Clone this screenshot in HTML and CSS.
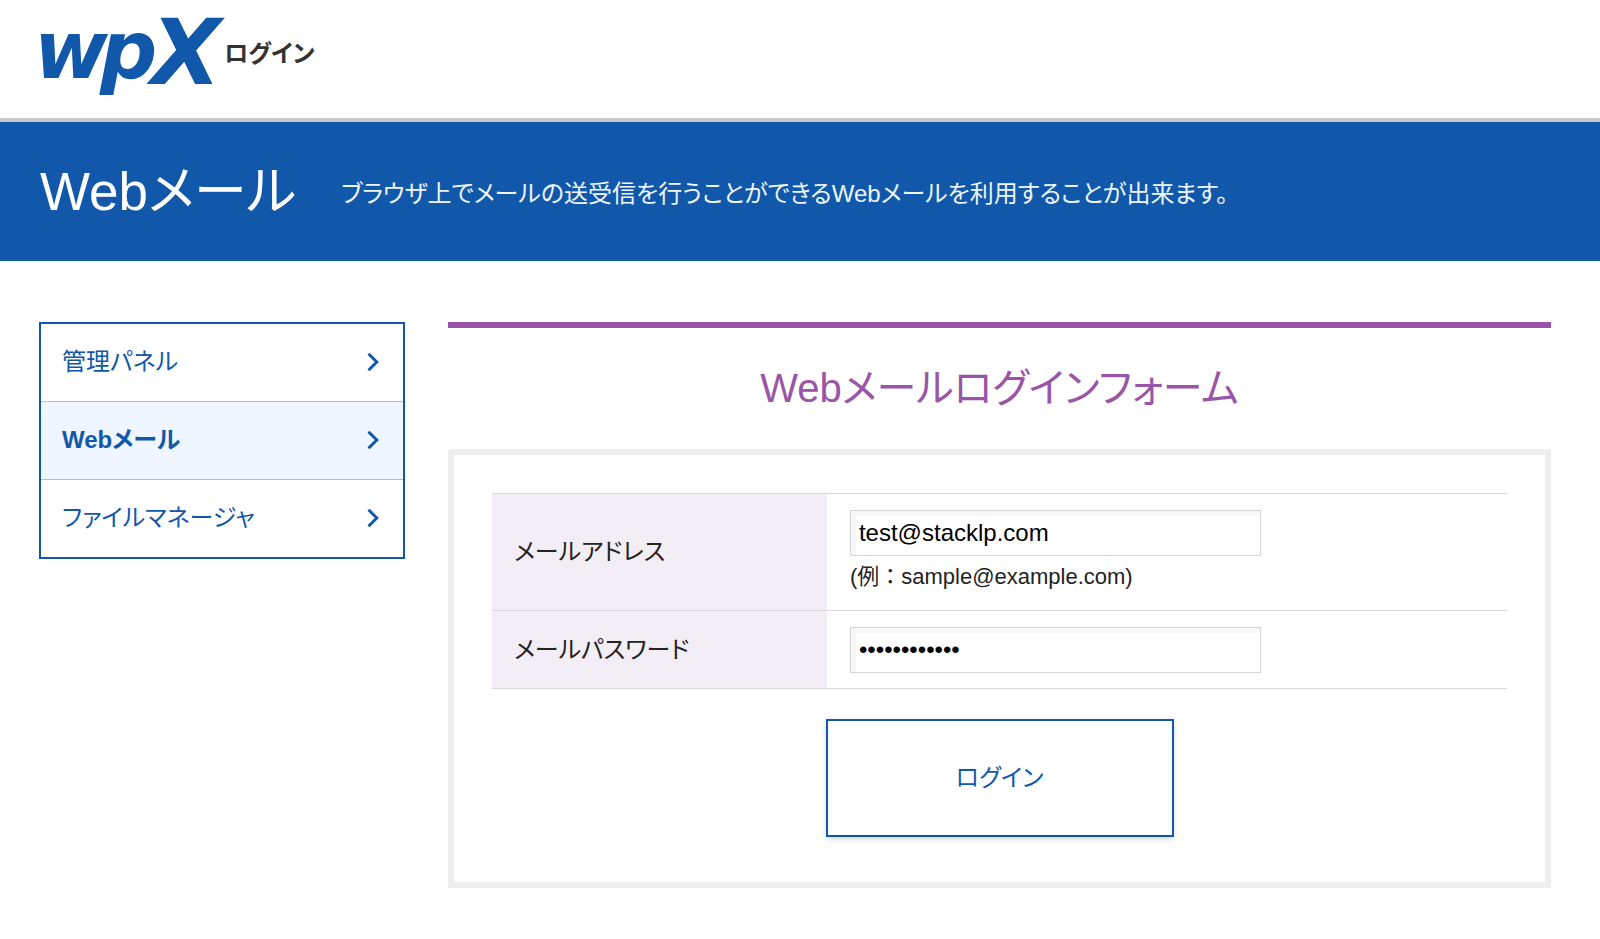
FILE: index.html
```html
<!DOCTYPE html>
<html lang="ja">
<head>
<meta charset="utf-8">
<meta name="viewport" content="width=device-width, initial-scale=1">
<title>Webメール | wpX ログイン</title>
<link rel="stylesheet" href="styles.css">
</head>
<body>
<header class="site-header">
  <svg class="logo" viewBox="0 0 184 118" role="img" aria-label="wpX">
    <text y="78"><tspan class="logo-small" x="-6">w</tspan><tspan class="logo-small" x="60">p</tspan><tspan class="logo-large" x="111" y="84">X</tspan></text>
  </svg>
  <span class="site-name">ログイン</span>
</header>
<div class="hero">
  <h1 class="hero-title">Webメール</h1>
  <p class="hero-text">ブラウザ上でメールの送受信を行うことができるWebメールを利用することが出来ます。</p>
</div>
<div class="content">
  <nav class="side-nav">
    <a class="side-link" href="#">管理パネル<svg class="chevron" viewBox="0 0 12 20"><path d="M1.5 1.8 9.8 10 1.5 18.2"/></svg></a>
    <a class="side-link is-current" href="#" aria-current="page">Webメール<svg class="chevron" viewBox="0 0 12 20"><path d="M1.5 1.8 9.8 10 1.5 18.2"/></svg></a>
    <a class="side-link" href="#">ファイルマネージャ<svg class="chevron" viewBox="0 0 12 20"><path d="M1.5 1.8 9.8 10 1.5 18.2"/></svg></a>
  </nav>
  <main class="main">
    <h2 class="form-title">Webメールログインフォーム</h2>
    <form class="login-form">
      <table class="fields">
        <tr>
          <th scope="row"><label for="mail">メールアドレス</label></th>
          <td><input class="field" id="mail" type="text" value="test@stacklp.com"><p class="hint">(例：sample@example.com)</p></td>
        </tr>
        <tr>
          <th scope="row"><label for="password">メールパスワード</label></th>
          <td><input class="field" id="password" type="password" value="abcdefghijkl"></td>
        </tr>
      </table>
      <button class="submit" type="submit">ログイン</button>
    </form>
  </main>
</div>
</body>
</html>
```

FILE: styles.css
```css
* {
  box-sizing: border-box;
}

body {
  margin: 0;
  background: #fff;
  color: #222;
  font-family: "Liberation Sans", "Noto Sans CJK JP", sans-serif;
  font-size: 24px;
  line-height: 36px;
  font-feature-settings: "palt";
}

.site-header {
  display: flex;
  align-items: center;
  padding: 0 40px;
  border-bottom: 4px solid #c8c8c8;
}

.logo {
  width: 184px;
  height: 118px;
  overflow: visible;
  fill: #1158aa;
  font-family: "DejaVu Sans", sans-serif;
  font-style: italic;
  font-weight: 700;
}

.logo-small {
  font-size: 80px;
}

.logo-large {
  font-size: 91px;
}

.site-name {
  padding-bottom: 11px;
  color: #333;
  font-weight: 700;
}

.hero {
  display: flex;
  align-items: center;
  gap: 45px;
  padding: 32px 40px;
  background: #1158aa;
  color: #fff;
}

.hero-title {
  margin: 0;
  font-size: 53px;
  font-weight: 400;
  line-height: 75px;
}

.hero-text {
  margin: 0;
  padding-top: 4px;
  color: #eef6ff;
}

.content {
  display: flex;
  align-items: flex-start;
  gap: 43px;
  padding: 61px 49px 52px 39px;
}

.side-nav {
  flex: 0 0 366px;
  border: 2px solid #1158aa;
}

.side-link {
  display: flex;
  align-items: center;
  justify-content: space-between;
  padding: 20px 24px 21px 21px;
  color: #1158aa;
  text-decoration: none;
}

.side-link + .side-link {
  border-top: 1px solid #b8bec6;
}

.side-link.is-current {
  background: #f0f6ff;
  font-weight: 700;
}

.chevron {
  width: 12px;
  height: 20px;
  fill: none;
  stroke: #1158aa;
  stroke-width: 3;
}

.main {
  flex: 1;
  border-top: 6px solid #9955a8;
}

.form-title {
  margin: 30px 0 31px;
  color: #9955a8;
  font-size: 40px;
  font-weight: 400;
  line-height: 60px;
  text-align: center;
}

.login-form {
  padding: 38px;
  border: 6px solid #eee;
}

.fields {
  width: 100%;
  border-collapse: collapse;
}

.fields tr {
  border-top: 1px solid #d9d9dc;
  border-bottom: 1px solid #d9d9dc;
}

.fields th {
  width: 33%;
  padding: 15px 22px;
  background: #f3eef6;
  font-weight: 400;
  text-align: left;
}

.fields td {
  padding: 16px 23px 15px;
}

.field {
  display: block;
  width: 411px;
  height: 46px;
  padding: 0 8px;
  border: 1px solid #d4d4d4;
  background: #fff;
  box-shadow: inset 5px 5px 0 #f7f7f7;
  color: #000;
  font: inherit;
}

.hint {
  margin: 3px 0 0;
  font-size: 22px;
  font-feature-settings: normal;
}

.submit {
  display: block;
  width: 348px;
  height: 118px;
  margin: 30px auto 7px;
  border: 2px solid #1158aa;
  background: #fff;
  box-shadow: 0 2px 6px rgba(0, 0, 0, 0.16);
  color: #1158aa;
  font: inherit;
  font-feature-settings: inherit;
}
```
